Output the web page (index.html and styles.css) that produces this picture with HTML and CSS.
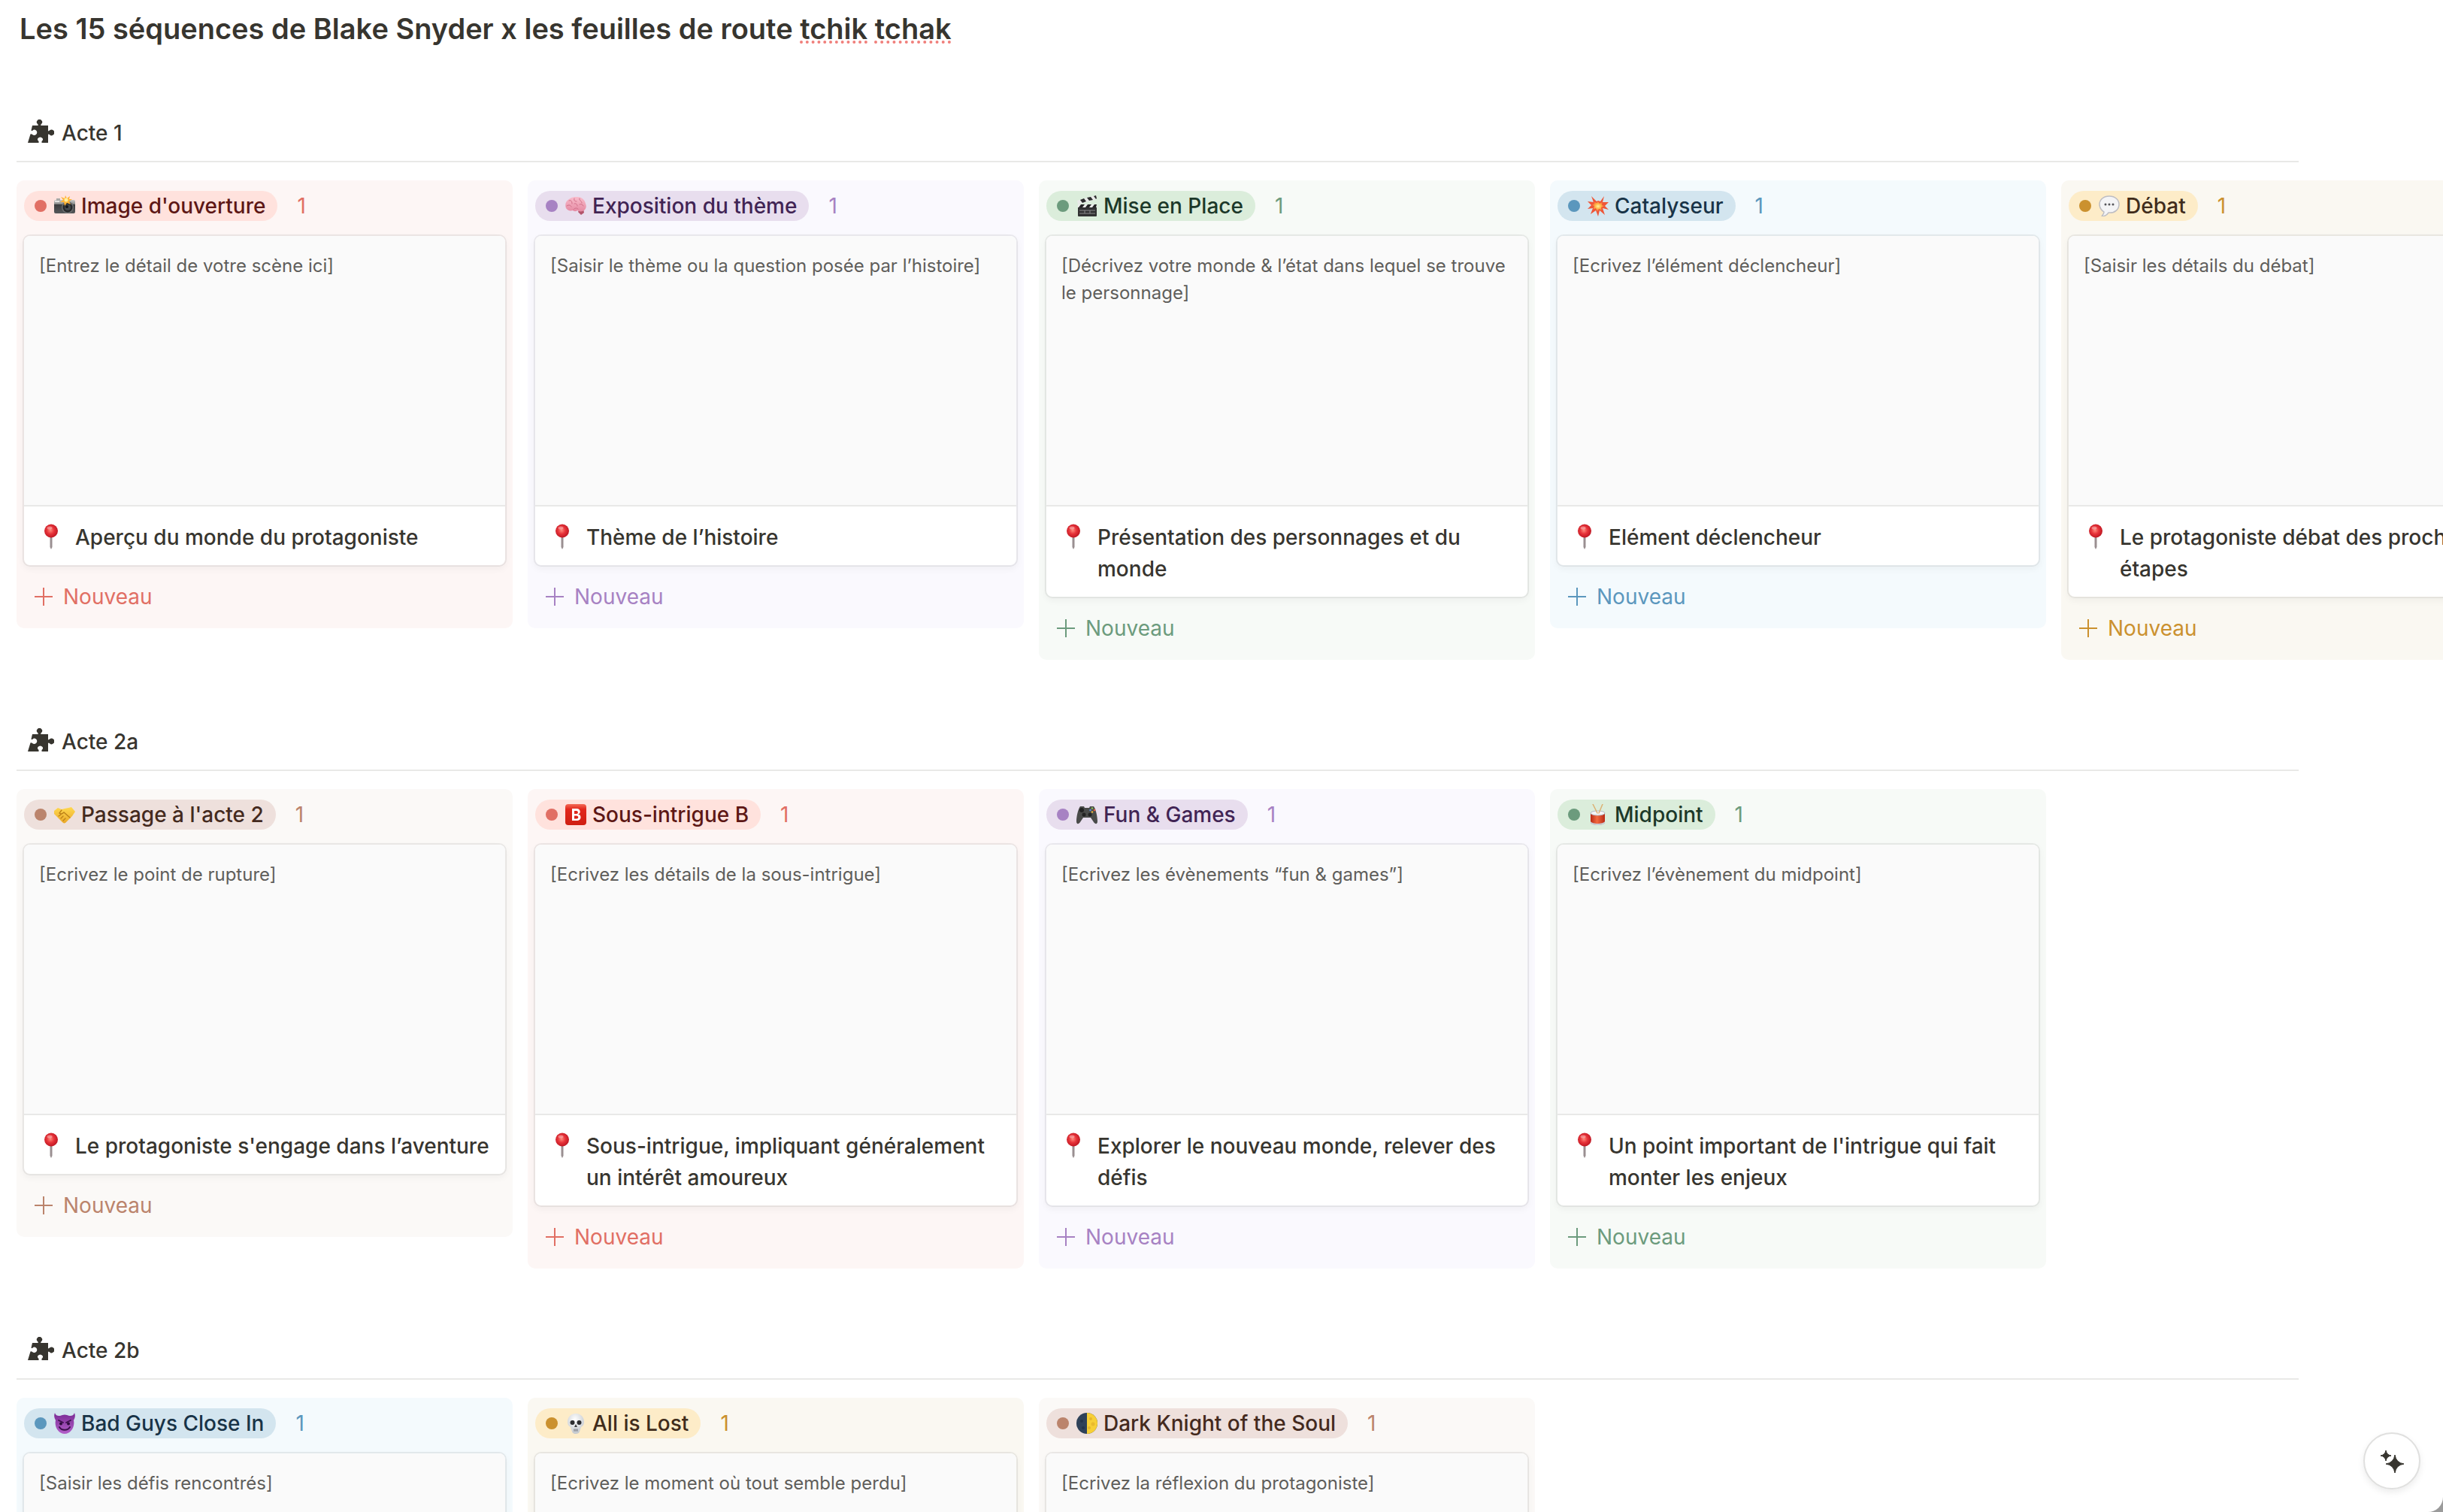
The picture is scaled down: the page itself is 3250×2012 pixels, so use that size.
FILE: index.html
```html
<!DOCTYPE html>
<html lang="fr">
<head>
<meta charset="utf-8">
<title>Les 15 séquences de Blake Snyder</title>
<meta name="viewport" content="width=device-width, initial-scale=1">
<link rel="stylesheet" href="styles.css">
</head>
<body>
<svg class="sprite" aria-hidden="true">
  <defs>
    <radialGradient id="g-pin" cx=".45" cy=".45" r=".6"><stop offset="0" stop-color="#ff8a7c"/><stop offset=".45" stop-color="#e8343a"/><stop offset="1" stop-color="#b8121f"/></radialGradient>
    <linearGradient id="g-cam" x1="0" y1="0" x2="0" y2="1"><stop offset="0" stop-color="#c9cac8"/><stop offset=".3" stop-color="#8d8f8e"/><stop offset=".34" stop-color="#3b3d3e"/><stop offset="1" stop-color="#55585a"/></linearGradient>
    <radialGradient id="g-boom"><stop offset="0" stop-color="#fff2a0"/><stop offset=".45" stop-color="#ffb545"/><stop offset="1" stop-color="#f2563a"/></radialGradient>
    <linearGradient id="g-hand" x1="0" y1="0" x2="0" y2="1"><stop offset="0" stop-color="#ffd84e"/><stop offset="1" stop-color="#eaa92a"/></linearGradient>
    <linearGradient id="g-b" x1="0" y1="0" x2="0" y2="1"><stop offset="0" stop-color="#f46a57"/><stop offset=".25" stop-color="#e2271b"/><stop offset="1" stop-color="#cf1f12"/></linearGradient>
    <linearGradient id="g-devil" x1="0" y1="0" x2="0" y2="1"><stop offset="0" stop-color="#7a2a94"/><stop offset="1" stop-color="#b25fc9"/></linearGradient>
    <radialGradient id="g-bone" cx=".45" cy=".3" r=".8"><stop offset="0" stop-color="#ffffff"/><stop offset="1" stop-color="#b9bfc6"/></radialGradient>
    <linearGradient id="g-drum" x1="0" x2="1"><stop offset="0" stop-color="#b92a16"/><stop offset=".45" stop-color="#f26a3f"/><stop offset="1" stop-color="#b92a16"/></linearGradient>
    <linearGradient id="g-brain" x1="0" y1="0" x2="0" y2="1"><stop offset="0" stop-color="#f9bccb"/><stop offset="1" stop-color="#e58aa3"/></linearGradient>
  </defs>
  <symbol id="puzzle" viewBox="0 0 36 32"><path fill="currentColor" d="M7 8H14.500Q15.200 7.500 14 6a3.600 3.600 0 1 1 5 0Q17.800 7.500 18.500 8H28V15Q28.600 16 30 14.600a3.800 3.800 0 1 1 0 5.600Q28.600 19 28 20V31H19.500V29Q22 27 20.500 25a3.600 3.600 0 0 0-6 0Q13 27 15.500 29V31H1L4.500 19.500Q6 19 7 20Q9.500 22 12 20a3.600 3.600 0 0 0 0-5.500Q9.500 12.500 7.500 14.500Q6.500 15.500 5.500 14.500Z"/></symbol>
  <symbol id="plus" viewBox="0 0 24 24"><path d="M12 0V24M0 12H24" stroke="currentColor" stroke-width="2"/></symbol>
  <symbol id="pin" viewBox="0 0 20 34"><path d="M8.500 16h3v15l-1.500 3-1.500-3z" fill="#9a8f91"/><circle cx="10" cy="9.500" r="9" fill="url(#g-pin)"/><ellipse cx="8" cy="5.500" rx="3.500" ry="2" fill="#fff" opacity=".35"/></symbol>
  <symbol id="camera" viewBox="0 0 28 28"><rect x="0" y="6" width="28" height="18" rx="2" fill="url(#g-cam)"/><rect x="3" y="4" width="5" height="3" fill="#a9aaa8"/><rect x="1" y="7" width="6" height="2" fill="#e4e4e2"/><circle cx="18" cy="16" r="8" fill="#6b6e70"/><circle cx="18" cy="16" r="6.500" fill="#26282a"/><circle cx="18" cy="16" r="4" fill="#45494d"/><circle cx="17" cy="15" r="2" fill="#15171a"/><path d="M15 0l2 4 4-3-1 4 4 0-4 3 2 4-5-2-3 4-1-5-5 0 4-3-3-4 5 2z" fill="#ffb436"/><circle cx="16" cy="6" r="2.500" fill="#fff0a0"/></symbol>
  <symbol id="brain" viewBox="0 0 28 28"><path d="M18 20l6-2 1 5-4 3-4-4z" fill="#b3546b"/><path d="M1 17C-1 12 1 7 5 5 8 2 13 2 16 2c6 0 10 4 11 9 2 4 0 9-4 10-3 1-5 0-7-1-2 2-5 1-6 0-4 1-7 0-9-3z" fill="url(#g-brain)"/><path d="M5 7c3-1 4 1 4 4m3-7c-1 3 1 4 3 4m4-4c-1 3 3 3 3 6M2 14c3-2 5-1 6 1m4-4c2-1 4 1 4 3m3-2c2-1 4 0 5 2m-13 5c1-2 4-3 6-1" fill="none" stroke="#cf6d87" stroke-width="1" stroke-linecap="round"/></symbol>
  <symbol id="clapper" viewBox="0 0 28 28"><path d="M1 7L26 0l1 5L2 12z" fill="#e9e9e9"/><path d="M5 6l5-2 3 4-5 2zM14 3l5-1 3 4-5 1zM23 1l3-1 1 4-1 1z" fill="#2c2c2d"/><rect x="2" y="12" width="25" height="16" rx="1" fill="#313132"/><path d="M2 12h25v4H2z" fill="#ececec"/><path d="M6 12h5l-3 4H3zM15 12h5l-3 4h-5zM24 12h3l-1 4h-5z" fill="#242425"/><path d="M4 20h21M4 24h21M11 20v4M18 20v4" stroke="#8b8b8c" stroke-width="1"/></symbol>
  <symbol id="boom" viewBox="0 0 28 28"><path d="M14 7L17 8 22 1 20 9 28 9 23 14 28 19 20 17 23 26 16 20 14 28 11 20 4 25 7 17 0 18 5 13 0 8 8 9 5 1 12 8z" fill="#ee5638"/><path d="M14 8l2 3 4-3-1 5 4 1-5 2 1 4-4-2-2 4-2-5-4 2 2-5-4-1 4-2-2-4 5 3z" fill="url(#g-boom)"/></symbol>
  <symbol id="speech" viewBox="0 0 28 28"><path d="M14 1C6 1 1 6 1 12c0 5 3 8 6 10 0 3-2 4-3 6 4 0 7-2 9-5 9 1 14-5 14-11S22 1 14 1z" fill="#f4f4f6" stroke="#bdbdc3" stroke-width="1.500"/><circle cx="9" cy="12" r="1.500" fill="#55565b"/><circle cx="14" cy="12" r="1.500" fill="#55565b"/><circle cx="19" cy="12" r="1.500" fill="#55565b"/></symbol>
  <symbol id="shake" viewBox="0 0 28 28"><path d="M0 9l5-4 5 2 4-1 5-1 4-1 5 6-4 6-4 4-5 5c-2 1-3 0-4-1L4 17 0 13z" fill="url(#g-hand)"/><path d="M10 8l-3 4c2 2 4 1 6-1l8 7M9 19l3-3M12 22l3-3M6 16l3-2" fill="none" stroke="#bd8118" stroke-width="1.300" stroke-linecap="round"/></symbol>
  <symbol id="bletter" viewBox="0 0 28 28"><rect width="28" height="28" rx="4" fill="url(#g-b)"/><path d="M9 6h6c6 0 6 7 2 7.500 5 .5 5 8.500-2 8.500H9zM12 9v4h3c2.500 0 2.500-4 0-4zM12 15.500v4h3c3 0 3-4 0-4z" fill="#fff" fill-rule="evenodd"/></symbol>
  <symbol id="gamepad" viewBox="0 0 28 28"><path d="M5 3h5l1 2h6l1-2h5c3 4 5 14 5 20 0 4-3 4-5 1l-4-6H9l-4 6c-2 3-5 3-5-1C0 17 2 7 5 3z" fill="#4a4b4a"/><circle cx="7" cy="8" r="3" fill="#232323"/><circle cx="10" cy="14" r="2.500" fill="#232323"/><circle cx="18" cy="14" r="2.500" fill="#232323"/><circle cx="21" cy="5.500" r="1.300" fill="#8fbf5a"/><circle cx="24" cy="8" r="1.300" fill="#ec5b3a"/><circle cx="18.500" cy="8" r="1.300" fill="#5b8fd6"/><circle cx="21" cy="10.500" r="1.300" fill="#e8b53c"/></symbol>
  <symbol id="drum" viewBox="0 0 28 28"><path d="M4 12h19v12c0 5-19 5-19 0z" fill="url(#g-drum)"/><path d="M4 23c2 4 17 4 19 0v2c0 4-19 4-19 0z" fill="#c9ced6"/><ellipse cx="13.500" cy="12" rx="9.500" ry="3" fill="#f4f5f7" stroke="#b4bac4"/><path d="M7 0l6 12M20 0l-5 12" stroke="#dcb274" stroke-width="1.500" stroke-linecap="round"/></symbol>
  <symbol id="devil" viewBox="0 0 28 28"><path d="M1 0c1 4 4 4 7 4 4-2 8-2 12 0 3 0 6 0 7-4 2 5 0 8-1 10 2 9-4 18-12 18S0 19 2 10C1 8-1 5 1 0z" fill="url(#g-devil)"/><path d="M6 10l6 3M22 10l-6 3" stroke="#3c0f4d" stroke-width="1.800" stroke-linecap="round"/><circle cx="9" cy="14.500" r="2" fill="#2f0b3e"/><circle cx="19" cy="14.500" r="2" fill="#2f0b3e"/><path d="M7 19c3 5 11 5 14 0" fill="none" stroke="#3c0f4d" stroke-width="2" stroke-linecap="round"/></symbol>
  <symbol id="skull" viewBox="0 0 28 28"><path d="M14 1C7 1 3 6 3 12c0 4 2 6 4 7l2 6c1 4 9 4 10 0l2-6c2-1 4-3 4-7 0-6-4-11-11-11z" fill="url(#g-bone)"/><circle cx="9.500" cy="13" r="3" fill="#2c2d30"/><circle cx="18.500" cy="13" r="3" fill="#2c2d30"/><path d="M14 15l-2 4h4z" fill="#3a3b3e"/><path d="M11 23h6M12 21v4M14 21v4M16 21v4" stroke="#8b8f96" stroke-width="1"/></symbol>
  <symbol id="moon" viewBox="0 0 28 28"><circle cx="14" cy="14" r="14" fill="#2f4259"/><path d="M14 0a14 14 0 0 1 0 28z" fill="#f7cf36"/><circle cx="19" cy="8" r="2" fill="#e6b62b"/><circle cx="22" cy="15" r="2.500" fill="#e9ba2e"/><circle cx="17" cy="20" r="2" fill="#e6b62b"/><circle cx="7" cy="11" r="2" fill="#24344a"/><circle cx="9" cy="20" r="2" fill="#24344a"/></symbol>
  <symbol id="sparkles" viewBox="0 0 36 36"><path fill="currentColor" d="M22 10Q23.500 20.500 34 22Q23.500 23.500 22 34Q20.500 23.500 10 22Q20.500 20.500 22 10ZM10 4Q11 10 17 11Q11 12 10 18Q9 12 3 11Q9 10 10 4Z" stroke="currentColor" stroke-width="1" stroke-linejoin="round"/></symbol>
</svg>

<main class="page">
  <h1 class="page-title">Les 15 séquences de Blake Snyder x les feuilles de route <span class="misspelt">tchik</span> <span class="misspelt">tchak</span></h1>

  <section class="act">
    <h2 class="act-title"><svg class="act-icon"><use href="#puzzle"/></svg>Acte 1</h2>
    <div class="board">
      <article class="column red">
        <header class="column-head"><h3 class="tag"><span class="dot"></span><svg class="emoji"><use href="#camera"/></svg>Image d'ouverture</h3><span class="count">1</span></header>
        <div class="card"><p class="preview">[Entrez le détail de votre scène ici]</p><h4 class="card-title"><svg class="pin"><use href="#pin"/></svg><span>Aperçu du monde du protagoniste</span></h4></div>
        <button class="add" type="button"><svg class="plus"><use href="#plus"/></svg>Nouveau</button>
      </article>
      <article class="column purple">
        <header class="column-head"><h3 class="tag"><span class="dot"></span><svg class="emoji"><use href="#brain"/></svg>Exposition du thème</h3><span class="count">1</span></header>
        <div class="card"><p class="preview">[Saisir le thème ou la question posée par l’histoire]</p><h4 class="card-title"><svg class="pin"><use href="#pin"/></svg><span>Thème de l’histoire</span></h4></div>
        <button class="add" type="button"><svg class="plus"><use href="#plus"/></svg>Nouveau</button>
      </article>
      <article class="column green">
        <header class="column-head"><h3 class="tag"><span class="dot"></span><svg class="emoji"><use href="#clapper"/></svg>Mise en Place</h3><span class="count">1</span></header>
        <div class="card"><p class="preview">[Décrivez votre monde &amp; l’état dans lequel se trouve le personnage]</p><h4 class="card-title"><svg class="pin"><use href="#pin"/></svg><span>Présentation des personnages et du monde</span></h4></div>
        <button class="add" type="button"><svg class="plus"><use href="#plus"/></svg>Nouveau</button>
      </article>
      <article class="column blue">
        <header class="column-head"><h3 class="tag"><span class="dot"></span><svg class="emoji"><use href="#boom"/></svg>Catalyseur</h3><span class="count">1</span></header>
        <div class="card"><p class="preview">[Ecrivez l’élément déclencheur]</p><h4 class="card-title"><svg class="pin"><use href="#pin"/></svg><span>Elément déclencheur</span></h4></div>
        <button class="add" type="button"><svg class="plus"><use href="#plus"/></svg>Nouveau</button>
      </article>
      <article class="column yellow">
        <header class="column-head"><h3 class="tag"><span class="dot"></span><svg class="emoji"><use href="#speech"/></svg>Débat</h3><span class="count">1</span></header>
        <div class="card"><p class="preview">[Saisir les détails du débat]</p><h4 class="card-title"><svg class="pin"><use href="#pin"/></svg><span>Le protagoniste débat des prochaines étapes</span></h4></div>
        <button class="add" type="button"><svg class="plus"><use href="#plus"/></svg>Nouveau</button>
      </article>
    </div>
  </section>

  <section class="act">
    <h2 class="act-title"><svg class="act-icon"><use href="#puzzle"/></svg>Acte 2a</h2>
    <div class="board">
      <article class="column brown">
        <header class="column-head"><h3 class="tag"><span class="dot"></span><svg class="emoji"><use href="#shake"/></svg>Passage à l'acte 2</h3><span class="count">1</span></header>
        <div class="card"><p class="preview">[Ecrivez le point de rupture]</p><h4 class="card-title"><svg class="pin"><use href="#pin"/></svg><span>Le protagoniste s'engage dans l’aventure</span></h4></div>
        <button class="add" type="button"><svg class="plus"><use href="#plus"/></svg>Nouveau</button>
      </article>
      <article class="column red">
        <header class="column-head"><h3 class="tag"><span class="dot"></span><svg class="emoji"><use href="#bletter"/></svg>Sous-intrigue B</h3><span class="count">1</span></header>
        <div class="card"><p class="preview">[Ecrivez les détails de la sous-intrigue]</p><h4 class="card-title"><svg class="pin"><use href="#pin"/></svg><span>Sous-intrigue, impliquant généralement un intérêt amoureux</span></h4></div>
        <button class="add" type="button"><svg class="plus"><use href="#plus"/></svg>Nouveau</button>
      </article>
      <article class="column purple">
        <header class="column-head"><h3 class="tag"><span class="dot"></span><svg class="emoji"><use href="#gamepad"/></svg>Fun &amp; Games</h3><span class="count">1</span></header>
        <div class="card"><p class="preview">[Ecrivez les évènements “fun &amp; games”]</p><h4 class="card-title"><svg class="pin"><use href="#pin"/></svg><span>Explorer le nouveau monde, relever des défis</span></h4></div>
        <button class="add" type="button"><svg class="plus"><use href="#plus"/></svg>Nouveau</button>
      </article>
      <article class="column green">
        <header class="column-head"><h3 class="tag"><span class="dot"></span><svg class="emoji"><use href="#drum"/></svg>Midpoint</h3><span class="count">1</span></header>
        <div class="card"><p class="preview">[Ecrivez l’évènement du midpoint]</p><h4 class="card-title"><svg class="pin"><use href="#pin"/></svg><span>Un point important de l'intrigue qui fait monter les enjeux</span></h4></div>
        <button class="add" type="button"><svg class="plus"><use href="#plus"/></svg>Nouveau</button>
      </article>
    </div>
  </section>

  <section class="act">
    <h2 class="act-title"><svg class="act-icon"><use href="#puzzle"/></svg>Acte 2b</h2>
    <div class="board">
      <article class="column blue">
        <header class="column-head"><h3 class="tag"><span class="dot"></span><svg class="emoji"><use href="#devil"/></svg>Bad Guys Close In</h3><span class="count">1</span></header>
        <div class="card"><p class="preview">[Saisir les défis rencontrés]</p></div>
      </article>
      <article class="column yellow">
        <header class="column-head"><h3 class="tag"><span class="dot"></span><svg class="emoji"><use href="#skull"/></svg>All is Lost</h3><span class="count">1</span></header>
        <div class="card"><p class="preview">[Ecrivez le moment où tout semble perdu]</p></div>
      </article>
      <article class="column brown">
        <header class="column-head"><h3 class="tag"><span class="dot"></span><svg class="emoji"><use href="#moon"/></svg>Dark Knight of the Soul</h3><span class="count">1</span></header>
        <div class="card"><p class="preview">[Ecrivez la réflexion du protagoniste]</p></div>
      </article>
    </div>
  </section>
</main>

<button class="assistant" type="button" aria-label="Assistant"><svg class="assistant-icon"><use href="#sparkles"/></svg></button>
</body>
</html>
```
FILE: styles.css
```css
* { box-sizing: border-box; }

html { background: #9b9b9b; }

body {
  margin: 0;
  font-family: Inter, "Liberation Sans", sans-serif;
  font-size: 28px;
  line-height: 42px;
  color: #37352f;
}

h1, h2, h3, h4, p { margin: 0; }

button {
  font: inherit;
  border: 0;
  cursor: pointer;
}

svg { flex: none; }

.sprite {
  position: absolute;
  width: 0;
  height: 0;
}

/* The window shows one screen of the page, with a rounded corner */
.page {
  height: 100vh;
  overflow: hidden;
  padding-left: 22px;
  background: #fff;
  border-bottom-right-radius: 20px;
}

.page-title {
  padding: 10px 4px 6px;
  margin-bottom: 68px;
  font-size: 38px;
  line-height: 56px;
  font-weight: 600;
}

.misspelt {
  text-decoration: underline dotted #f07f7b 4px;
  text-underline-offset: 2px;
  text-decoration-skip-ink: none;
}

.act { margin-bottom: 72px; }

.act-title {
  display: flex;
  align-items: center;
  gap: 10px;
  height: 76px;
  margin-right: 192px;
  padding-left: 14px;
  border-bottom: 2px solid #e9e9e7;
  font-size: 28px;
  font-weight: 500;
}

.act-icon {
  width: 36px;
  height: 32px;
  margin-bottom: 4px;
}

.board {
  display: flex;
  align-items: flex-start;
  gap: 20px;
  padding-top: 24px;
}

.column {
  flex: none;
  width: 660px;
  padding: 14px 8px 10px;
  border-radius: 10px;
  background: var(--wash);
}

.column-head {
  display: flex;
  align-items: center;
  gap: 26px;
  height: 40px;
  padding-left: 2px;
  margin-bottom: 18px;
  line-height: 40px;
}

.tag {
  display: flex;
  align-items: center;
  height: 40px;
  padding: 0 16px 0 14px;
  border-radius: 20px;
  background: var(--pill);
  color: var(--ink);
  font-size: 28px;
  font-weight: 500;
}

.dot {
  width: 16px;
  height: 16px;
  margin-right: 10px;
  border-radius: 50%;
  background: var(--accent);
}

.emoji {
  width: 28px;
  height: 28px;
  margin-right: 8px;
}

.count { color: var(--accent); }

.card {
  overflow: hidden;
  border: 2px solid rgba(15, 15, 15, 0.07);
  border-radius: 10px;
  background: #fff;
  background-clip: padding-box;
  box-shadow: 0 4px 8px rgba(15, 15, 15, 0.04);
}

.preview {
  height: 360px;
  padding: 22px 20px;
  border-bottom: 2px solid #e9e9e8;
  background: #fafafa;
  color: #5f5e5b;
  font-size: 24px;
  line-height: 36px;
}

.card-title {
  display: flex;
  gap: 22px;
  padding: 20px 16px 16px 26px;
  font-size: 28px;
  font-weight: 500;
}

.pin {
  width: 20px;
  height: 34px;
  margin-top: 3px;
}

.add {
  display: flex;
  align-items: center;
  gap: 14px;
  width: 100%;
  height: 64px;
  margin-top: 8px;
  padding: 0 16px;
  background: none;
  color: var(--accent);
}

.plus {
  width: 24px;
  height: 24px;
}

.red { --wash: #fdf6f5; --pill: #ffe2dd; --ink: #5d1715; --accent: #e16f64; }
.purple { --wash: #faf9fe; --pill: #e8deee; --ink: #412454; --accent: #a782c3; }
.green { --wash: #f7faf7; --pill: #dbeddb; --ink: #1c3829; --accent: #6c9b7d; }
.blue { --wash: #f4fafd; --pill: #d3e5ef; --ink: #183347; --accent: #5b97bd; }
.yellow { --wash: #faf8f2; --pill: #fdecc8; --ink: #402c1b; --accent: #cb912f; }
.brown { --wash: #fbf9f7; --pill: #eee0dc; --ink: #442a1e; --accent: #bb846c; }

/* Floating assistant button over the page */
.assistant {
  position: fixed;
  right: 30px;
  bottom: 30px;
  display: grid;
  place-items: center;
  width: 76px;
  height: 76px;
  padding: 0;
  border: 2px solid #e0e0df;
  border-radius: 50%;
  background: #fff;
  color: #37352f;
  box-shadow: 0 4px 10px rgba(15, 15, 15, 0.08);
}

.assistant-icon {
  width: 36px;
  height: 36px;
}
```
